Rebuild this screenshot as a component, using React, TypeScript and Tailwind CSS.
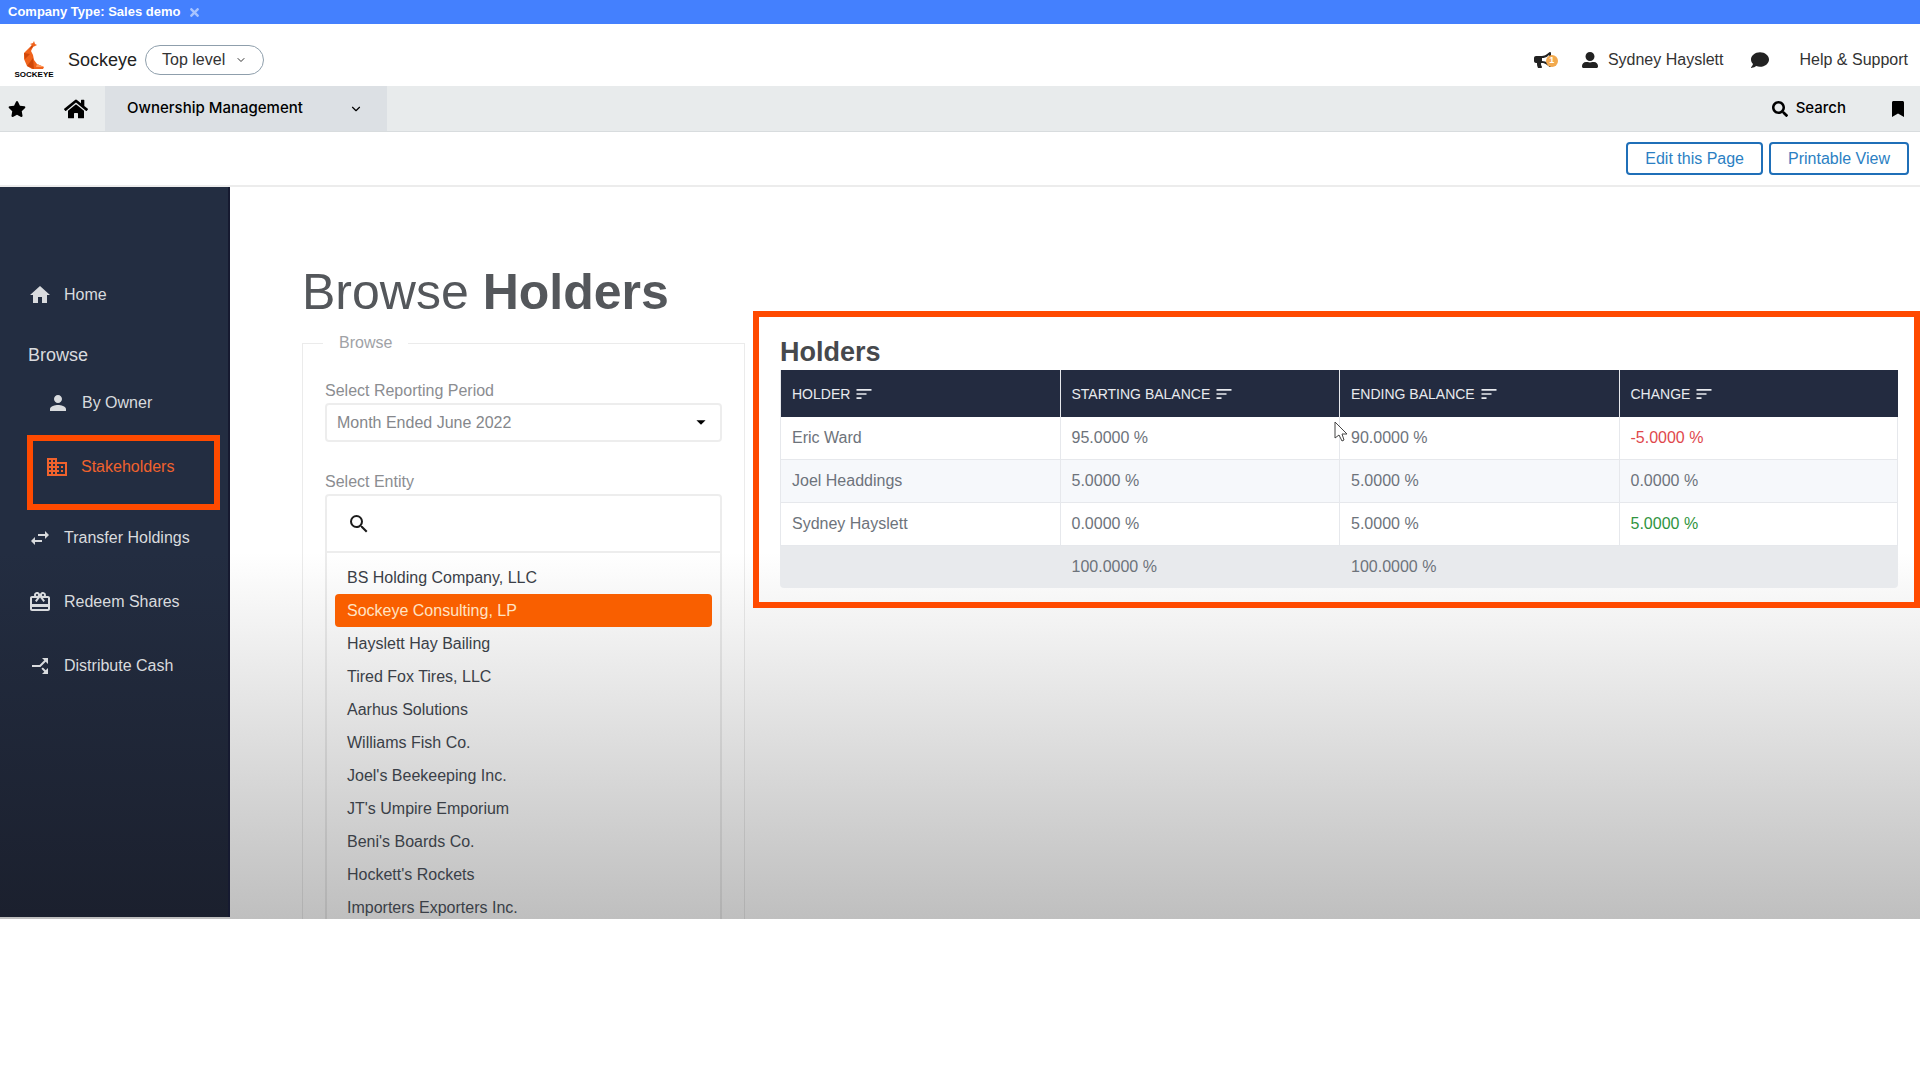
import React from "react";
import {
  FaBookmark,
  FaBullhorn,
  FaComment,
  FaHome,
  FaSearch,
  FaStar,
  FaTimes,
  FaUserAlt,
} from "react-icons/fa";
import { FiChevronDown } from "react-icons/fi";
import {
  MdArrowDropDown,
  MdBusiness,
  MdCallSplit,
  MdHome,
  MdPerson,
  MdRedeem,
  MdSearch,
  MdSort,
  MdSwapHoriz,
} from "react-icons/md";

const entities = [
  "BS Holding Company, LLC",
  "Sockeye Consulting, LP",
  "Hayslett Hay Bailing",
  "Tired Fox Tires, LLC",
  "Aarhus Solutions",
  "Williams Fish Co.",
  "Joel's Beekeeping Inc.",
  "JT's Umpire Emporium",
  "Beni's Boards Co.",
  "Hockett's Rockets",
  "Importers Exporters Inc.",
];

const columns = ["HOLDER", "STARTING BALANCE", "ENDING BALANCE", "CHANGE"];

const holders = [
  { name: "Eric Ward", start: "95.0000 %", end: "90.0000 %", change: "-5.0000 %", color: "text-[#e0484c]" },
  { name: "Joel Headdings", start: "5.0000 %", end: "5.0000 %", change: "0.0000 %", color: "text-[#6d737b]" },
  { name: "Sydney Hayslett", start: "0.0000 %", end: "5.0000 %", change: "5.0000 %", color: "text-[#2f9440]" },
];

const Logo = () => (
  <div className="flex w-10 flex-col items-center">
    <svg width="24" height="29" viewBox="0 0 24 29" aria-hidden="true">
      <path d="M8 3 11 2 12 0 13 3 15 4 11 6 9 10 11 14 12 19 15 23 22 26 21 28 10 28 5 25 2 18 2 12 6 8 10 4Z" fill="#f0631c" />
      <path d="M2 12 8 13 3 18ZM5 25 11 17 12 28ZM10 4 11 6 7 9Z" fill="#cf4709" />
      <path d="M15 23 22 26 14 26Z" fill="#ff9a5c" />
    </svg>
    <span className="text-[8px] leading-[9px] font-bold text-black">SOCKEYE</span>
  </div>
);

const Header = () => (
  <header>
    <div className="flex h-6 items-center gap-2 bg-[#4480fe] px-2 text-[13px] font-bold text-white">
      <span>Company Type: Sales demo</span>
      <button aria-label="Dismiss" className="text-[#a8c4ff]">
        <FaTimes size={13} />
      </button>
    </div>
    <div className="flex h-[62px] items-center justify-between pt-2.5 pr-3 pl-3.5">
      <div className="flex items-center">
        <Logo />
        <span className="ml-3.5 text-lg text-[#222]">Sockeye</span>
        <button className="ml-2 flex h-[30px] items-center gap-2.5 rounded-full border border-[#8f9fac] px-4 text-[#333]">
          Top level
          <FiChevronDown size={12} />
        </button>
      </div>
      <div className="flex items-center text-[#333]">
        <button aria-label="Announcements" className="relative flex w-6 text-[#222]">
          <FaBullhorn size={18} />
          <span className="absolute top-1 right-0 flex size-3 items-center justify-center rounded-full bg-[#f2a94e] text-[9px] font-bold text-white">
            1
          </span>
        </button>
        <a href="#user" className="ml-6 flex items-center gap-2.5">
          <FaUserAlt size={16} className="text-[#222]" />
          Sydney Hayslett
        </a>
        <button aria-label="Messages" className="ml-7 text-[#222]">
          <FaComment size={18} />
        </button>
        <a href="#help" className="ml-7.5">
          Help &amp; Support
        </a>
      </div>
    </div>
  </header>
);

const NavBar = () => (
  <nav className="flex h-[46px] items-center justify-between border-b border-[#d8dcde] bg-[#e8ebec] pr-3.5">
    <div className="flex h-full items-center">
      <a href="#favorites" aria-label="Favorites" className="flex w-14 pl-2 text-black">
        <FaStar size={18} />
      </a>
      <a href="#home" aria-label="Home" className="flex w-[49px] pl-2 text-black">
        <FaHome size={24} />
      </a>
      <button className="flex h-full w-[282px] items-center justify-between bg-[#dce0e4] pr-6 pl-[22px] font-['Inter'] text-[15px] font-medium text-black">
        Ownership Management
        <FiChevronDown size={14} />
      </button>
    </div>
    <div className="flex items-center text-black">
      <button className="flex items-center gap-2 font-['Inter'] text-[15px] font-medium">
        <FaSearch size={16} />
        Search
      </button>
      <button aria-label="Bookmark" className="ml-11">
        <FaBookmark size={16} />
      </button>
    </div>
  </nav>
);

const SideBar = () => (
  <aside className="mb-0.5 flex w-[230px] shrink-0 flex-col border-r-2 border-[#161a30] bg-linear-to-b from-[#232d41] from-50% to-[#1b202e] pt-24 leading-6 text-[#d9dbde]">
    <a href="#dashboard" className="flex items-center gap-3 pl-7">
      <MdHome size={24} />
      Home
    </a>
    <h2 className="mt-9 pl-7 text-lg leading-6">Browse</h2>
    <a href="#owner" className="mt-6 flex items-center gap-3 pl-[46px]">
      <MdPerson size={24} />
      By Owner
    </a>
    <div className="mt-5 mr-2 ml-[27px] h-[75px] border-6 border-[#ff4a00] pt-3.5">
      <a href="#stakeholders" className="flex items-center gap-3 pl-3 text-[#f0622d]">
        <MdBusiness size={24} />
        Stakeholders
      </a>
    </div>
    <a href="#transfer" className="mt-4 flex items-center gap-3 pl-7">
      <MdSwapHoriz size={24} />
      Transfer Holdings
    </a>
    <a href="#redeem" className="mt-10 flex items-center gap-3 pl-7">
      <MdRedeem size={24} />
      Redeem Shares
    </a>
    <a href="#distribute" className="mt-10 flex items-center gap-3 pl-7">
      <MdCallSplit size={24} className="rotate-90" />
      Distribute Cash
    </a>
  </aside>
);

const BrowsePanel = () => (
  <fieldset className="mt-5 w-[443px] shrink-0 border border-b-0 border-[#00000014] px-[22px] text-[#8b8d91]">
    <legend className="-ml-0.5 px-4 leading-6 text-[#a0a2a6]">Browse</legend>
    <label htmlFor="period" className="mt-6 block leading-6">
      Select Reporting Period
    </label>
    <div className="relative">
      <select
        id="period"
        className="h-[39px] w-full appearance-none rounded border-2 border-[#00000012] px-2.5 text-[#85878b]"
      >
        <option>Month Ended June 2022</option>
      </select>
      <MdArrowDropDown size={22} className="pointer-events-none absolute top-2 right-2.5 text-black" />
    </div>
    <label htmlFor="entity" className="mt-7 block leading-6">
      Select Entity
    </label>
    <div className="rounded-t border-2 border-b-0 border-[#00000012]">
      <div className="flex h-[57px] items-center border-b-2 border-[#00000012] pl-5">
        <MdSearch size={24} className="text-[#1c1c1c]" />
        <input id="entity" type="text" className="h-10 flex-1 outline-none" />
      </div>
      <ul className="px-2 pt-2">
        {entities.map((entity, i) => (
          <li key={entity}>
            <button
              className={
                i === 1
                  ? "block h-[33px] w-full rounded bg-[#f95f00] px-3 text-left text-[#ffe3c4]"
                  : "block h-[33px] w-full px-3 text-left text-[#3a3f47]"
              }
            >
              {entity}
            </button>
          </li>
        ))}
      </ul>
    </div>
  </fieldset>
);

const HoldersTable = () => (
  <section className="relative flex-1 border-6 border-[#ff4a00] pt-[17px] pr-4 pb-3.5 pl-[21px]">
    <h2 className="text-[27px] leading-9 font-bold text-[#46494d]">Holders</h2>
    <table className="w-full table-fixed border-separate border-spacing-0 overflow-hidden rounded-b text-left text-[#6d737b]">
      <thead>
        <tr className="h-[47px] bg-[#232b40]">
          {columns.map((column) => (
            <th key={column} className="border-l border-[#e6e8ec] px-[11px] font-normal">
              <button className="flex items-center gap-1 text-sm text-[#e8eaee]">
                {column}
                <MdSort size={20} />
              </button>
            </th>
          ))}
        </tr>
      </thead>
      <tbody>
        {holders.map((holder) => (
          <tr key={holder.name} className="h-[43px] even:bg-[#f6f8fb]">
            <td className="border-b border-l border-[#e6e8ec] px-[11px]">{holder.name}</td>
            <td className="border-b border-l border-[#e6e8ec] px-[11px]">{holder.start}</td>
            <td className="border-b border-l border-[#e6e8ec] px-[11px]">{holder.end}</td>
            <td className={`border-x border-b border-[#e6e8ec] px-[11px] ${holder.color}`}>{holder.change}</td>
          </tr>
        ))}
      </tbody>
      <tfoot>
        <tr className="h-[42px] bg-[#e8eaed]">
          <td />
          <td className="px-3">100.0000 %</td>
          <td className="px-3">100.0000 %</td>
          <td />
        </tr>
      </tfoot>
    </table>
    {/* Mouse pointer */}
    <svg width="14" height="22" viewBox="0 0 14 22" className="absolute top-[104px] left-[575px]" aria-hidden="true">
      <path d="M1 1V17L5 14L8 20L10 19L8 13H13Z" fill="#fff" stroke="#444" strokeWidth="1" />
    </svg>
  </section>
);

export default function App() {
  return (
    <div className="min-h-screen bg-white font-['Liberation_Sans',sans-serif] text-base">
      <Header />
      <NavBar />
      <div className="flex h-[55px] items-center justify-end gap-1.5 border-b-2 border-[#ececec] pr-[11px]">
        <button className="h-[33px] rounded border-2 border-[#1f6fb8] px-[17px] text-[#2b7fc3]">Edit this Page</button>
        <button className="h-[33px] rounded border-2 border-[#1f6fb8] px-[17px] text-[#2b7fc3]">Printable View</button>
      </div>
      <div className="flex h-[732px] overflow-hidden bg-linear-to-b from-white from-50% to-[#bfbfbf]">
        <SideBar />
        <main className="flex-1 pt-[86px] pl-[72px]">
          <h1 className="text-[50px] leading-[38px] text-[#54575b]">
            Browse <b>Holders</b>
          </h1>
          <div className="flex items-start gap-2">
            <BrowsePanel />
            <HoldersTable />
          </div>
        </main>
      </div>
    </div>
  );
}
